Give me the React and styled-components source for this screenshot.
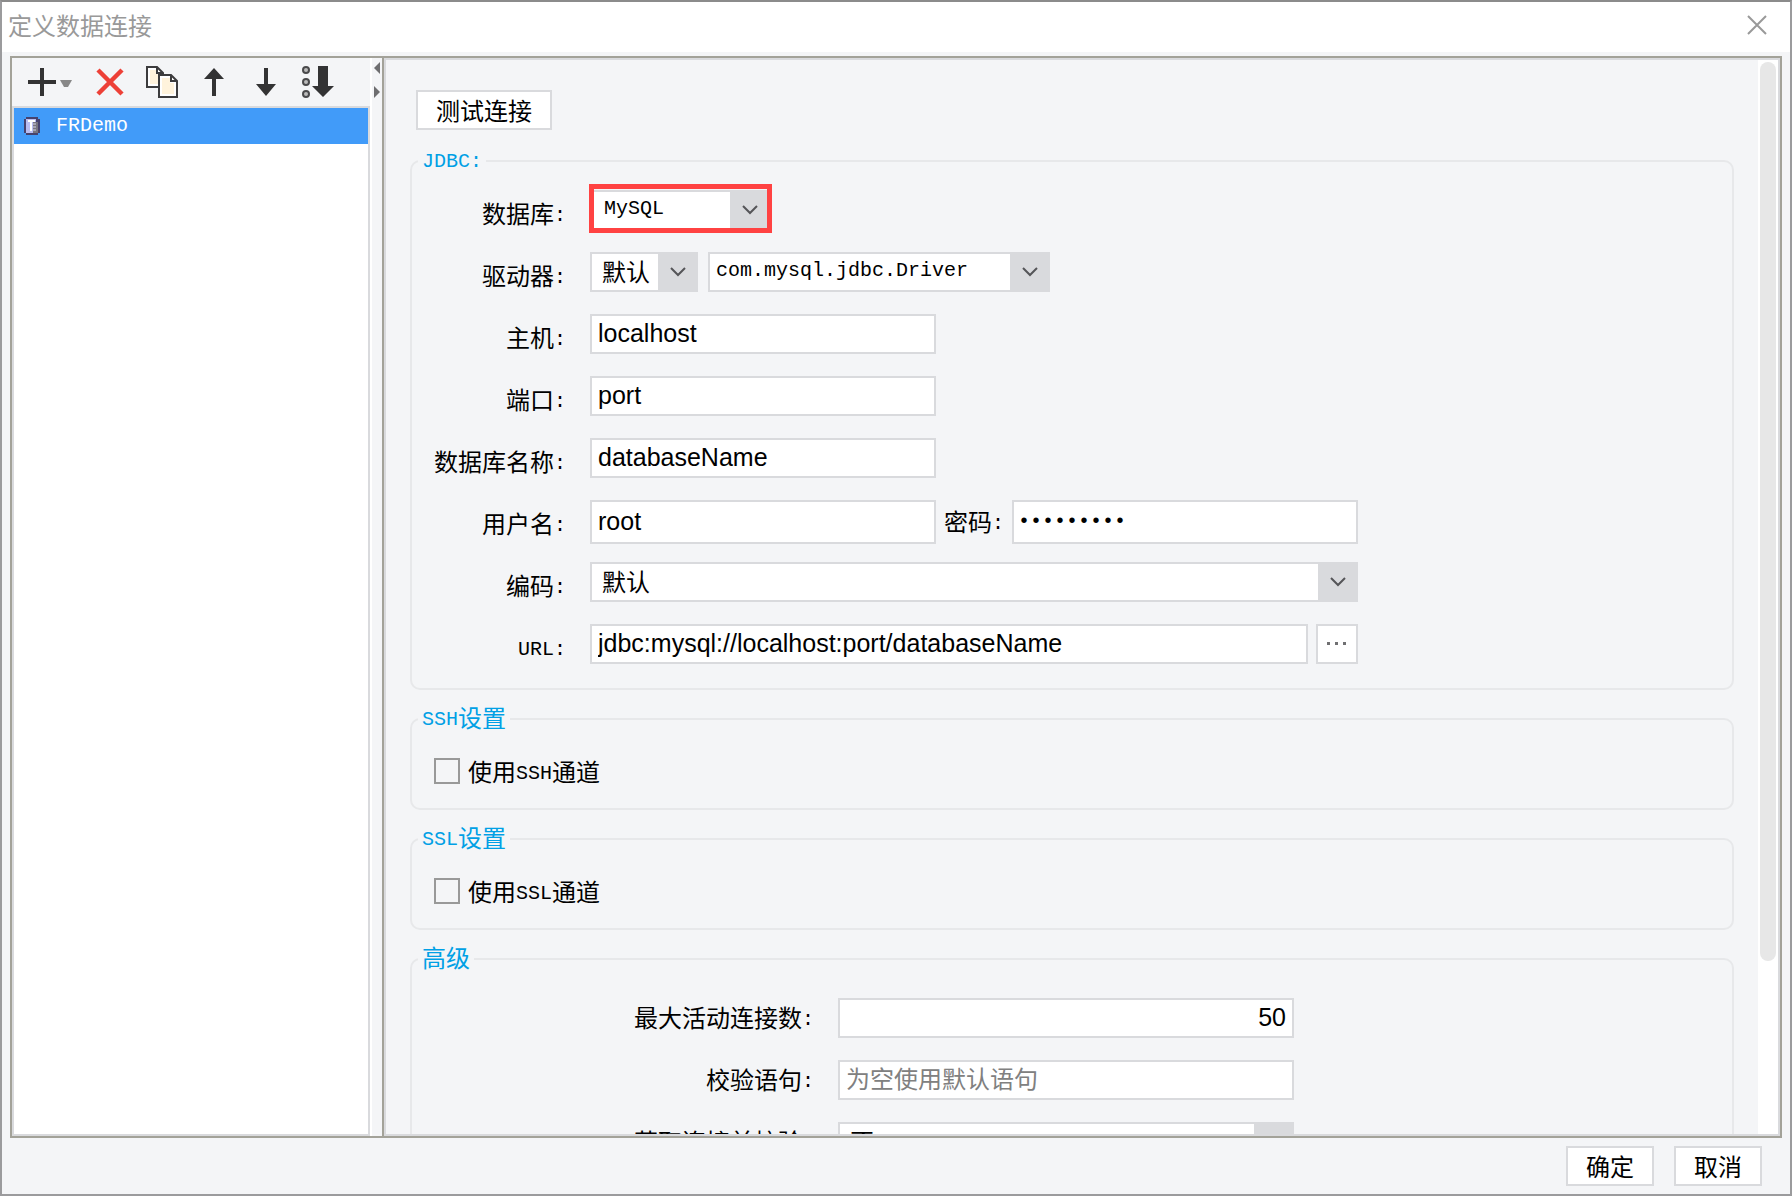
import React from 'react'
import styled, { createGlobalStyle } from 'styled-components'

const COLORS = {
  BACKGROUND: '#f4f5f7',
  BORDER: '#d9dadd',
  FRAME: '#a3a299',
  GROUP: '#e7e8ea',
  LEGEND: '#00a0e5',
  SELECTED: '#419bf9',
  HIGHLIGHT: '#ff4242',
  ICON: '#333334',
}

const CJK_FONT = '"Noto Sans CJK SC", sans-serif'
const MONO_FONT = '"Liberation Mono", "Noto Sans CJK SC", monospace'
const INPUT_FONT = '"Liberation Sans", "Noto Sans CJK SC", sans-serif'

const GlobalStyle = createGlobalStyle`
  * {
    box-sizing: border-box;
  }
  body {
    margin: 0;
    color: #000;
    font-family: ${CJK_FONT};
    font-size: 24px;
  }
`

const Dialog = styled.div`
  display: flex;
  flex-direction: column;
  height: 100vh;
  overflow: hidden;
  background: ${COLORS.BACKGROUND};
  border: 2px solid #9b9b9d;
  border-top-color: #8b8b8b;
`

const TitleBar = styled.header`
  display: flex;
  flex: none;
  align-items: center;
  justify-content: space-between;
  height: 50px;
  padding: 0 20px 4px 6px;
  background: white;
`
const Title = styled.h1`
  margin: 0;
  font-size: 24px;
  font-weight: normal;
  line-height: 40px;
  color: #999;
`
const IconButton = styled.button`
  display: flex;
  align-items: center;
  justify-content: center;
  width: 52px;
  height: 32px;
  padding: 0;
  background: none;
  border: none;
`
const AddButton = styled(IconButton)`
  justify-content: flex-end;
  width: 62px;
  margin-right: 10px;
`
const CloseButton = styled(IconButton)`
  width: 24px;
`

const Body = styled.main`
  display: flex;
  flex: 1;
  min-height: 0;
  margin: 4px 8px 0;
  border: 2px solid ${COLORS.FRAME};
`

const Sidebar = styled.aside`
  display: flex;
  flex: none;
  flex-direction: column;
  width: 358px;
`
const Toolbar = styled.div`
  display: flex;
  flex: none;
  align-items: center;
  height: 48px;
`
const ConnectionList = styled.ul`
  flex: 1;
  margin: 0;
  padding: 0;
  list-style: none;
  background: white;
  border: 2px solid ${COLORS.BORDER};
`
const Connection = styled.li`
  display: flex;
  align-items: center;
  gap: 16px;
  height: 36px;
  padding-left: 10px;
  color: white;
  background: ${COLORS.SELECTED};
`

const Divider = styled.div`
  flex: none;
  width: 12px;
  padding: 4px 2px;
  border-left: 2px solid white;
`

const Pane = styled.section`
  display: flex;
  flex: 1;
  min-width: 0;
  border-left: 2px solid ${COLORS.FRAME};
`
const PaneFrame = styled.div`
  display: flex;
  flex: 1;
  min-width: 0;
  border: 2px solid ${COLORS.BORDER};
`
const PaneContent = styled.div`
  flex: 1;
  min-width: 0;
  padding: 30px 24px 0;
  overflow: hidden;
`
const ScrollTrack = styled.div`
  flex: none;
  width: 20px;
  padding: 2px;
  background: white;
`
const ScrollThumb = styled.div`
  height: 84%;
  background: #e7e7e7;
  border-radius: 8px;
`

const Button = styled.button`
  width: ${({ $width }) => $width}px;
  height: 40px;
  padding: 0;
  font-family: ${CJK_FONT};
  font-size: 24px;
  line-height: 36px;
  color: #000;
  background: white;
  border: 2px solid ${COLORS.BORDER};
`
const TestButton = styled(Button)`
  display: block;
  margin: 0 0 18px 6px;
`
const MoreButton = styled(Button)`
  display: flex;
  align-items: center;
  justify-content: center;
`

const Group = styled.fieldset`
  min-width: 0;
  margin: 0 0 16px;
  padding: ${({ $padding }) => $padding};
  border: 2px solid ${COLORS.GROUP};
  border-radius: 10px;
`
const Legend = styled.legend`
  height: 26px;
  margin-left: 6px;
  padding: 0 4px;
  line-height: 22px;
  color: ${COLORS.LEGEND};
`
// Half-width characters take half of a 24px ideograph
const Latin = styled.span`
  font-family: ${MONO_FONT};
  font-size: 20px;
  line-height: 20px;
  vertical-align: 2px;
`

const Row = styled.div`
  display: flex;
  align-items: flex-start;
  height: 62px;
`
const Label = styled.label`
  flex: none;
  width: ${({ $width }) => $width}px;
  margin-right: 24px;
  line-height: ${({ $lineHeight }) => $lineHeight || 46}px;
  text-align: right;
  white-space: nowrap;
`
const InlineLabel = styled.label`
  padding: 0 8px;
  line-height: 42px;
  white-space: nowrap;
`
const Input = styled.input`
  width: ${({ $width }) => $width}px;
  height: ${({ $tall }) => ($tall ? 44 : 40)}px;
  padding: 0 6px 2px;
  font-family: ${INPUT_FONT};
  font-size: 25px;
  color: #000;
  text-align: ${({ $align }) => $align || 'left'};
  background: white;
  border: 2px solid ${COLORS.BORDER};
  border-radius: 0;
  outline: none;

  &::placeholder {
    font-size: 24px;
    color: #808080;
    opacity: 1;
  }
`
const PasswordInput = styled(Input)`
  padding: 0 4px 2px;
  font-family: ${MONO_FONT};
  font-size: 20px;
`
const UrlInput = styled(Input)`
  margin-right: 8px;
`

const ComboBox = styled.div`
  position: relative;
  width: ${({ $width }) => $width}px;
  height: 40px;
  margin-right: 10px;
`
const ComboSelect = styled.select`
  display: block;
  width: 100%;
  height: 40px;
  padding: 0 40px 2px ${({ $indent }) => $indent}px;
  font-family: ${({ $latin }) => ($latin ? MONO_FONT : CJK_FONT)};
  font-size: ${({ $latin }) => ($latin ? 20 : 24)}px;
  line-height: 34px;
  color: #000;
  appearance: none;
  background: white;
  border: 2px solid ${COLORS.BORDER};
  border-radius: 0;
  outline: none;
`
const ComboArrow = styled.span`
  position: absolute;
  top: 0;
  right: 0;
  display: flex;
  align-items: center;
  justify-content: center;
  width: 40px;
  height: 40px;
  background: ${COLORS.BORDER};
  pointer-events: none;
`
const Highlight = styled.span`
  position: absolute;
  inset: -6px -2px -3px -1px;
  border: 5px solid ${COLORS.HIGHLIGHT};
  pointer-events: none;
`

const CheckLabel = styled.label`
  display: flex;
  align-items: center;
  gap: 8px;
  height: 26px;
  margin: 0 22px;
  line-height: 26px;
`
const Checkbox = styled.input`
  width: 26px;
  height: 26px;
  margin: 0;
  appearance: none;
  border: 2px solid #999;
`

const Footer = styled.footer`
  display: flex;
  flex: none;
  gap: 20px;
  justify-content: flex-end;
  padding: 8px 28px;
`

const AddIcon = () => (
  <svg width="48" height="32" viewBox="0 0 48 32">
    <path d="M2 16h28M16 2v28" stroke={COLORS.ICON} strokeWidth="4" />
    <path d="M34 14h12l-4 7h-4z" fill="#888" />
  </svg>
)

const RemoveIcon = () => (
  <svg width="32" height="32" viewBox="0 0 32 32">
    <path d="M4 4l24 24M28 4L4 28" stroke="#ed4037" strokeWidth="4.500" />
  </svg>
)

const CopyIcon = () => (
  <svg width="32" height="32" viewBox="0 0 32 32" stroke="#3c3c3e" strokeWidth="2">
    <path d="M1 1h10l6 6v14H1z" fill="white" />
    <path d="M4 4h6v4h3v10H4z" fill="#fff3dc" stroke="none" />
    <path d="M11 1v6h6" fill="none" />
    <path d="M13 9h12l6 6v16H13z" fill="white" />
    <path d="M16 12h8v5h4v11H16z" fill="#fff3dc" stroke="none" />
    <path d="M25 9v6h6" fill="none" />
  </svg>
)

const UpIcon = () => (
  <svg width="32" height="32" viewBox="0 0 32 32">
    <path d="M16 2l10 11h-8v17h-4V13H6z" fill={COLORS.ICON} />
  </svg>
)

const DownIcon = () => (
  <svg width="32" height="32" viewBox="0 0 32 32">
    <path d="M14 2h4v16h8L16 30 6 18h8z" fill={COLORS.ICON} />
  </svg>
)

const SortIcon = () => (
  <svg width="32" height="32" viewBox="0 0 32 32">
    <g fill="#bbb" stroke="#4a4a4c" strokeWidth="2">
      <circle cx="4" cy="4" r="3" />
      <circle cx="4" cy="16" r="3" />
      <circle cx="4" cy="28" r="3" />
    </g>
    <path d="M16 0h10v20h6L21 31 10 20h6z" fill={COLORS.ICON} />
  </svg>
)

const DatabaseIcon = () => (
  <svg width="16" height="18" viewBox="0 0 16 18">
    <path d="M2 0h12v2h2v14h-2v2H2v-2H0V2h2z" fill="#46426e" />
    <path d="M2 2h10v14H2z" fill="#b9bdf2" />
    <path d="M4 3h7v2H8v9H6V5H4z" fill="white" />
    <path d="M9 5h5v11H9z" fill="#77747f" />
    <path d="M9 7h3M9 10h3M9 13h3" stroke="#d6d6e6" />
  </svg>
)

const SplitIcon = () => (
  <svg width="6" height="36" viewBox="0 0 6 36" fill="#6e6e70">
    <path d="M6 0v12L0 6z" />
    <path d="M0 24v12l6-6z" />
  </svg>
)

const CloseIcon = () => (
  <svg width="24" height="24" viewBox="0 0 24 24">
    <path d="M2 3l18 18M20 3L2 21" stroke="#999" strokeWidth="2" />
  </svg>
)

const ChevronIcon = () => (
  <svg width="18" height="12" viewBox="0 0 18 12">
    <path d="M2 2l7 7 7-7" fill="none" stroke="#555558" strokeWidth="2" />
  </svg>
)

const MoreIcon = () => (
  <svg width="20" height="4" viewBox="0 0 20 4" fill="#707072">
    <path d="M0 0h3v3H0zM8 0h3v3H8zM16 0h3v3h-3z" />
  </svg>
)

const Combo = ({ id, label, value, width, indent = 10, latin, highlighted }) => (
  <ComboBox $width={width}>
    <ComboSelect id={id} aria-label={label} $indent={indent} $latin={latin}>
      <option>{value}</option>
    </ComboSelect>
    <ComboArrow>
      <ChevronIcon />
    </ComboArrow>
    {highlighted && <Highlight />}
  </ComboBox>
)

const JdbcLabel = ({ id, children }) => (
  <Label htmlFor={id} $width={154}>
    {children}
    <Latin>:</Latin>
  </Label>
)

const PoolLabel = ({ id, children }) => (
  <Label htmlFor={id} $width={402} $lineHeight={38}>
    {children}
    <Latin>:</Latin>
  </Label>
)

const TUNNELS = ['SSH', 'SSL']

const TOOLS = [
  { label: '删除', Icon: RemoveIcon },
  { label: '复制', Icon: CopyIcon },
  { label: '上移', Icon: UpIcon },
  { label: '下移', Icon: DownIcon },
  { label: '排序', Icon: SortIcon },
]

const App = () => (
  <>
    <GlobalStyle />
    <Dialog>
      <TitleBar>
        <Title>定义数据连接</Title>
        <CloseButton aria-label="关闭">
          <CloseIcon />
        </CloseButton>
      </TitleBar>
      <Body>
        <Sidebar>
          <Toolbar>
            <AddButton aria-label="新建">
              <AddIcon />
            </AddButton>
            {TOOLS.map(({ label, Icon }) => (
              <IconButton key={label} aria-label={label}>
                <Icon />
              </IconButton>
            ))}
          </Toolbar>
          <ConnectionList>
            <Connection>
              <DatabaseIcon />
              <Latin>FRDemo</Latin>
            </Connection>
          </ConnectionList>
        </Sidebar>
        <Divider>
          <SplitIcon />
        </Divider>
        <Pane>
          <PaneFrame>
            <PaneContent>
              <TestButton $width={136}>测试连接</TestButton>
              <Group $padding="16px 0 2px">
                <Legend>
                  <Latin>JDBC:</Latin>
                </Legend>
                <Row>
                  <JdbcLabel id="database">数据库</JdbcLabel>
                  <Combo id="database" value="MySQL" width={180} indent={12} latin highlighted />
                </Row>
                <Row>
                  <JdbcLabel id="driver">驱动器</JdbcLabel>
                  <Combo id="driver" value="默认" width={108} />
                  <Combo
                    label="驱动器类"
                    value="com.mysql.jdbc.Driver"
                    width={342}
                    indent={6}
                    latin
                  />
                </Row>
                <Row>
                  <JdbcLabel id="host">主机</JdbcLabel>
                  <Input id="host" defaultValue="localhost" $width={346} />
                </Row>
                <Row>
                  <JdbcLabel id="port">端口</JdbcLabel>
                  <Input id="port" defaultValue="port" $width={346} />
                </Row>
                <Row>
                  <JdbcLabel id="name">数据库名称</JdbcLabel>
                  <Input id="name" defaultValue="databaseName" $width={346} />
                </Row>
                <Row>
                  <JdbcLabel id="user">用户名</JdbcLabel>
                  <Input id="user" defaultValue="root" $width={346} $tall />
                  <InlineLabel htmlFor="password">
                    密码<Latin>:</Latin>
                  </InlineLabel>
                  <PasswordInput
                    id="password"
                    type="password"
                    defaultValue="123456789"
                    $width={346}
                    $tall
                  />
                </Row>
                <Row>
                  <JdbcLabel id="encoding">编码</JdbcLabel>
                  <Combo id="encoding" value="默认" width={768} />
                </Row>
                <Row>
                  <Label htmlFor="url" $width={154}>
                    <Latin>URL:</Latin>
                  </Label>
                  <UrlInput
                    id="url"
                    defaultValue="jdbc:mysql://localhost:port/databaseName"
                    $width={718}
                  />
                  <MoreButton aria-label="编辑" $width={42}>
                    <MoreIcon />
                  </MoreButton>
                </Row>
              </Group>
              {TUNNELS.map(name => (
                <Group key={name} $padding="26px 0 24px">
                  <Legend>
                    <Latin>{name}</Latin>设置
                  </Legend>
                  <CheckLabel>
                    <Checkbox type="checkbox" />
                    <span>
                      使用<Latin>{name}</Latin>通道
                    </span>
                  </CheckLabel>
                </Group>
              ))}
              <Group $padding="26px 0 2px">
                <Legend>高级</Legend>
                <Row>
                  <PoolLabel id="active">最大活动连接数</PoolLabel>
                  <Input id="active" defaultValue="50" $width={456} $align="right" />
                </Row>
                <Row>
                  <PoolLabel id="query">校验语句</PoolLabel>
                  <Input id="query" placeholder="为空使用默认语句" $width={456} />
                </Row>
                <Row>
                  <PoolLabel id="borrow">获取连接前校验</PoolLabel>
                  <Combo id="borrow" value="否" width={456} />
                </Row>
              </Group>
            </PaneContent>
            <ScrollTrack>
              <ScrollThumb />
            </ScrollTrack>
          </PaneFrame>
        </Pane>
      </Body>
      <Footer>
        <Button $width={88}>确定</Button>
        <Button $width={88}>取消</Button>
      </Footer>
    </Dialog>
  </>
)

export default App
